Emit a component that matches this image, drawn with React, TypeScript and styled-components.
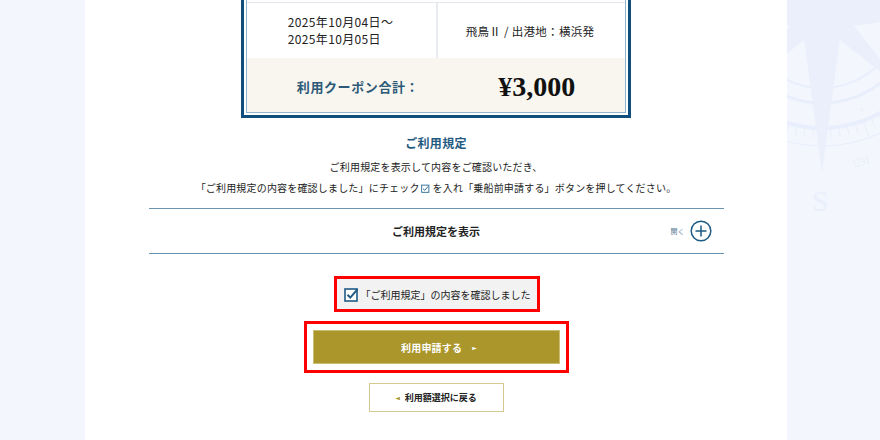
import React from "react";
import styled, { createGlobalStyle } from "styled-components";

const Global = createGlobalStyle`
  html, body { margin: 0; padding: 0; }
  body {
    background: #f3f6fd;
    font-family: "Noto Sans CJK JP", "Noto Sans", sans-serif;
    color: #222;
    overflow: hidden;
  }
`;

const SERIF = `"Liberation Serif", "Noto Sans CJK JP", serif`;
const SANS = `"Noto Sans CJK JP", "Noto Sans", sans-serif`;

const Page = styled.div`
  display: flex;
  width: 880px;
  height: 440px;
  overflow: hidden;
`;

const Gutter = styled.div<{ $w?: number }>`
  position: relative;
  flex: ${(p) => (p.$w ? `0 0 ${p.$w}px` : "1 1 auto")};
  background: #f3f6fd;
  overflow: hidden;
`;

const Main = styled.main`
  flex: 0 0 702px;
  background: #fff;
  display: flex;
  flex-direction: column;
  align-items: center;
`;

const Box = styled.div`
  margin-top: -50px;
  border: 3px solid #0f4f7e;
  padding: 2px;
  box-sizing: content-box;
  width: 380px;
  background: #fff;
`;

const BoxInner = styled.div`
  border: 1px solid #8fb4cd;
`;

const HeaderRow = styled.div`
  height: 46px;
  border-bottom: 1px solid #e3e8ee;
`;

const InfoRow = styled.div`
  display: grid;
  grid-template-columns: 1fr 1fr;
  height: 55px;
`;

const InfoCell = styled.div<{ $divider?: boolean }>`
  display: flex;
  align-items: center;
  justify-content: center;
  border-left: ${(p) => (p.$divider ? "2px solid #e8ebef" : "none")};
  font-family: ${SANS};
  color: #222;
`;

const DateText = styled.div`
  display: flex;
  flex-direction: column;
  font-size: 12px;
  line-height: 17.5px;
  letter-spacing: 0.35px;
  text-align: left;
  margin: -1px 0 0 -2px;
`;

const ShipText = styled.div`
  font-size: 11.5px;
  letter-spacing: 0.3px;
  margin-right: 3px;
`;

const TotalRow = styled.div`
  height: 54px;
  background: #f8f6ee;
  display: flex;
  align-items: center;
  justify-content: center;
  gap: 82px;
  padding-top: 3px;
  box-sizing: border-box;
`;

const TotalLabel = styled.span`
  font-family: ${SERIF};
  font-weight: 700;
  font-size: 13px;
  letter-spacing: 0.6px;
  color: #2c5a78;
`;

const TotalAmount = styled.span`
  font-family: ${SERIF};
  font-weight: 700;
  font-size: 28px;
  color: #111;
  line-height: 1;
  margin-left: -3px;
`;

const Title = styled.h2`
  margin: 17px 0 0;
  font-family: ${SERIF};
  font-weight: 700;
  font-size: 12px;
  line-height: 18px;
  color: #1f5a80;
  letter-spacing: 0.3px;
`;

const Desc = styled.p`
  margin: 3px 0 0;
  text-align: center;
  font-family: ${SANS};
  font-size: 10px;
  line-height: 21px;
  letter-spacing: 0.18px;
  color: #222;
`;

const InlineCheck = styled.svg`
  width: 9px;
  height: 9px;
  vertical-align: -1px;
  margin: 0 3px 0 1px;
`;

const Accordion = styled.div`
  margin-top: 10px;
  width: 575px;
  height: 46px;
  box-sizing: border-box;
  border-top: 1px solid #6a93b0;
  border-bottom: 1px solid #6a93b0;
  display: grid;
  grid-template-columns: 1fr auto 1fr;
  align-items: center;
`;

const AccTitle = styled.div`
  grid-column: 2;
  font-family: ${SERIF};
  font-weight: 700;
  font-size: 11px;
  color: #222;
`;

const Toggle = styled.div`
  grid-column: 3;
  justify-self: end;
  margin-right: 12px;
  display: flex;
  align-items: center;
  gap: 5px;
  font-family: ${SANS};
  font-size: 7px;
  color: #5d8099;
`;

const Highlight = styled.div<{ $w: number; $h: number; $pad?: number; $bg?: string }>`
  width: ${(p) => p.$w}px;
  height: ${(p) => p.$h}px;
  box-sizing: border-box;
  border: 3px solid #f00;
  padding: ${(p) => p.$pad ?? 0}px;
  background: ${(p) => p.$bg ?? "#fff"};
  display: flex;
  align-items: center;
  justify-content: center;
`;

const ConfirmWrap = styled.div`
  margin-top: 22px;
  margin-left: 2px;
`;

const ApplyWrap = styled.div`
  margin-top: 9px;
`;

const CheckLabel = styled.label`
  display: flex;
  align-items: center;
  gap: 2px;
  font-family: ${SANS};
  font-size: 10px;
  color: #222;
`;

const CheckSvg = styled.svg`
  width: 15px;
  height: 15px;
  display: block;
`;

const GoldButton = styled.button`
  width: 100%;
  height: 100%;
  background: #aa962a;
  border: 1px solid #cbbd74;
  color: #fff;
  font-family: ${SERIF};
  font-weight: 700;
  font-size: 10px;
  letter-spacing: 0.2px;
  display: flex;
  align-items: center;
  justify-content: center;
  gap: 10px;
  cursor: pointer;
  padding: 0 0 0 6px;
`;

const Arrow = styled.span<{ $color: string }>`
  font-size: 6px;
  color: ${(p) => p.$color};
  font-family: "DejaVu Sans", sans-serif;
`;

const BackButton = styled.button`
  margin-top: 10px;
  width: 135px;
  height: 29px;
  background: #fff;
  border: 1.5px solid #d6c990;
  font-family: ${SERIF};
  font-weight: 700;
  font-size: 9px;
  color: #222;
  display: flex;
  align-items: center;
  justify-content: center;
  gap: 5px;
  padding: 0;
  cursor: pointer;
`;

const Compass = styled.svg`
  position: absolute;
  left: -110px;
  top: -140px;
  width: 300px;
  height: 360px;
  pointer-events: none;
`;

function CompassRose() {
  const cx = 145;
  const cy = 148;
  const fill = "#eaeffb";
  const stroke = "#e8eefb";
  const ticks = [];
  for (let a = 0; a < 360; a += 4) {
    const r = (a * Math.PI) / 180;
    const r1 = 122;
    const r2 = a % 20 === 0 ? 136 : 130;
    ticks.push(
      <line
        key={a}
        x1={cx + r1 * Math.sin(r)}
        y1={cy + r1 * Math.cos(r)}
        x2={cx + r2 * Math.sin(r)}
        y2={cy + r2 * Math.cos(r)}
        stroke={stroke}
        strokeWidth={1}
      />
    );
  }
  const pt = (angle: number, len: number, w: number) => {
    const r = (angle * Math.PI) / 180;
    const tipX = cx + len * Math.sin(r);
    const tipY = cy + len * Math.cos(r);
    const lx = cx + w * Math.sin(r + Math.PI / 2);
    const ly = cy + w * Math.cos(r + Math.PI / 2);
    const rx = cx + w * Math.sin(r - Math.PI / 2);
    const ry = cy + w * Math.cos(r - Math.PI / 2);
    return `M${lx},${ly} L${tipX},${tipY} L${rx},${ry} Z`;
  };
  return (
    <Compass viewBox="0 0 300 360">
      <circle cx={cx} cy={cy} r={80} fill="none" stroke={stroke} strokeWidth={2} />
      <circle cx={cx} cy={cy} r={95} fill="none" stroke={stroke} strokeWidth={3} />
      <circle cx={cx} cy={cy} r={120} fill="none" stroke={stroke} strokeWidth={4} />
      <circle cx={cx} cy={cy} r={138} fill="none" stroke={stroke} strokeWidth={1} />
      {ticks}
      {[45, 135, 225, 315].map((a) => (
        <path key={a} d={pt(a, 120, 14)} fill={fill} />
      ))}
      {[0, 90, 180, 270].map((a) => (
        <path key={a} d={pt(a, 165, 22)} fill={fill} />
      ))}
      <circle cx={cx + 40} cy={cy + 102} r={1.5} fill={fill} />
      <circle cx={cx - 80} cy={cy + 105} r={1.5} fill={fill} />
      <text
        x={cx - 2}
        y={cy + 203}
        fontFamily="Liberation Serif, serif"
        fontSize={30}
        fill={fill}
        textAnchor="middle"
      >
        S
      </text>
      <text
        x={cx + 48}
        y={cy + 148}
        fontFamily="Liberation Serif, serif"
        fontSize={12}
        fill={fill}
        transform={`rotate(168 ${cx + 48} ${cy + 148})`}
      >
        165
      </text>
    </Compass>
  );
}

export default function App() {
  return (
    <>
      <Global />
      <Page>
        <Gutter $w={85} />
        <Main>
          <Box>
            <BoxInner>
              <HeaderRow />
              <InfoRow>
                <InfoCell>
                  <DateText>
                    <span>2025年10月04日～</span>
                    <span>2025年10月05日</span>
                  </DateText>
                </InfoCell>
                <InfoCell $divider>
                  <ShipText>飛鳥Ⅱ / 出港地：横浜発</ShipText>
                </InfoCell>
              </InfoRow>
              <TotalRow>
                <TotalLabel>利用クーポン合計：</TotalLabel>
                <TotalAmount>¥3,000</TotalAmount>
              </TotalRow>
            </BoxInner>
          </Box>

          <Title>ご利用規定</Title>
          <Desc>
            ご利用規定を表示して内容をご確認いただき、
            <br />
            「ご利用規定の内容を確認しました」にチェック
            <InlineCheck viewBox="0 0 10 10">
              <rect x="0.75" y="1.25" width="8" height="8" fill="none" stroke="#2a6a98" strokeWidth="1" />
              <path d="M2.3 5.2 L4.2 7 L8 2.6" fill="none" stroke="#2a6a98" strokeWidth="1.1" />
            </InlineCheck>
            を入れ「乗船前申請する」ボタンを押してください。
          </Desc>

          <Accordion>
            <AccTitle>ご利用規定を表示</AccTitle>
            <Toggle>
              <span>開く</span>
              <svg width="22" height="22" viewBox="0 0 22 22">
                <circle cx="11" cy="11" r="9.8" fill="none" stroke="#1d5b84" strokeWidth="1.5" />
                <path d="M11 5.5 V16.5 M5.5 11 H16.5" stroke="#1d5b84" strokeWidth="1.5" />
              </svg>
            </Toggle>
          </Accordion>

          <ConfirmWrap>
            <Highlight $w={206} $h={36} $bg="#f2f2f2">
              <CheckLabel>
                <CheckSvg viewBox="0 0 15 15">
                  <rect x="1" y="2" width="12" height="12" fill="#fff" stroke="#1f5a85" strokeWidth="1.6" />
                  <path d="M3.5 7.8 L6.3 10.6 L13.6 2.2" fill="none" stroke="#1f5a85" strokeWidth="2" />
                </CheckSvg>
                「ご利用規定」の内容を確認しました
              </CheckLabel>
            </Highlight>
          </ConfirmWrap>

          <ApplyWrap>
            <Highlight $w={265} $h={52} $pad={6}>
              <GoldButton>
                利用申請する
                <Arrow $color="#fff">►</Arrow>
              </GoldButton>
            </Highlight>
          </ApplyWrap>

          <BackButton>
            <Arrow $color="#a8952a">◄</Arrow>
            利用額選択に戻る
          </BackButton>
        </Main>
        <Gutter>
          <CompassRose />
        </Gutter>
      </Page>
    </>
  );
}
